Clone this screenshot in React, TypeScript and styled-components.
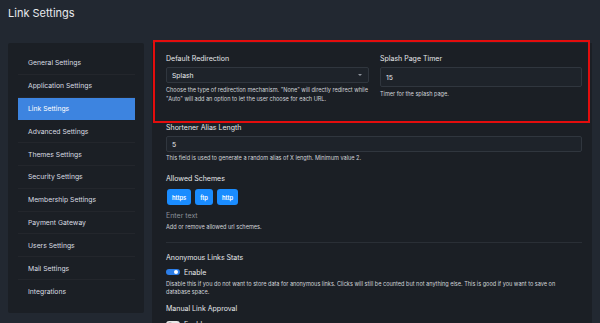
import React from "react";
import styled, { createGlobalStyle } from "styled-components";

const Global = createGlobalStyle`
  html, body { margin: 0; padding: 0; background: #222831; }
  body { font-family: Inter, "Noto Sans", sans-serif; color: #e4e6ea; overflow: hidden; }
  #root { height: 323px; }
`;

const Page = styled.div`
  height: 323px;
  padding: 6px 8px 0 8px;
  box-sizing: border-box;
  overflow: hidden;
`;

const Title = styled.h1`
  margin: 0 0 23px 0;
  font-size: 11px;
  line-height: 14px;
  font-weight: 400;
  color: #e8eaed;
`;

const Layout = styled.div`
  display: flex;
  gap: 8px;
  align-items: flex-start;
`;

const Sidebar = styled.nav`
  width: 136px;
  box-sizing: border-box;
  background: #1b1f25;
  border-radius: 2px;
  padding: 9px 9px 10px 10px;
  display: flex;
  flex-direction: column;
`;

const NavItem = styled.div<{ $active?: boolean }>`
  height: 22.8px;
  box-sizing: border-box;
  padding-left: 10px;
  display: flex;
  align-items: center;
  font-size: 6.8px;
  color: ${(p) => (p.$active ? "#ffffff" : "#d9dce1")};
  background: ${(p) => (p.$active ? "#3d84e0" : "transparent")};
  border-bottom: 1px solid ${(p) => (p.$active ? "#3d84e0" : "rgba(255,255,255,0.035)")};
  &:last-child { border-bottom: none; }
`;

const Main = styled.section`
  width: 440px;
  height: 290px;
  box-sizing: border-box;
  background: #1b1f25;
  padding: 0 10px 0 14px;
  display: flex;
  flex-direction: column;
`;

const Highlight = styled.div`
  margin: -3px -8px 0 -13px;
  border: 2px solid #e30d0d;
  padding: 12px 6px 18px 11px;
  display: grid;
  grid-template-columns: 203px 1fr;
  column-gap: 11px;
`;

const Field = styled.div`
  display: flex;
  flex-direction: column;
`;

const Label = styled.div<{ $mt?: number }>`
  font-size: 7px;
  line-height: 9px;
  color: #e6e8eb;
  margin-top: ${(p) => p.$mt ?? 0}px;
`;

const Help = styled.div<{ $mt?: number; $maxw?: number }>`
  font-size: 5.55px;
  line-height: 8.5px;
  color: #d2d5da;
  margin-top: ${(p) => p.$mt ?? 0}px;
  max-width: ${(p) => (p.$maxw ? `${p.$maxw}px` : "none")};
`;

const Box = styled.div<{ $h: number; $mt?: number }>`
  height: ${(p) => p.$h}px;
  box-sizing: border-box;
  margin-top: ${(p) => p.$mt ?? 4}px;
  background: #1e232a;
  border: 1px solid #30363e;
  border-radius: 2px;
  padding: 0 5px;
  display: flex;
  align-items: center;
  justify-content: space-between;
  font-size: 6.8px;
  color: #e8eaed;
`;

const Caret = styled.span`
  width: 0;
  height: 0;
  border-left: 2px solid transparent;
  border-right: 2px solid transparent;
  border-top: 2px solid #8d939b;
  margin-right: 1px;
`;

const Chips = styled.div`
  display: flex;
  gap: 4px;
  margin-top: 6.5px;
  padding-left: 1px;
`;

const Chip = styled.span`
  height: 16px;
  box-sizing: border-box;
  padding: 0 5px;
  display: flex;
  align-items: center;
  background: #1a8cff;
  border-radius: 3px;
  font-size: 5.8px;
  font-weight: 600;
  color: #ffffff;
`;

const Placeholder = styled.div`
  font-size: 7px;
  line-height: 9px;
  color: #8a9098;
  margin-top: 5.5px;
`;

const Divider = styled.div`
  height: 1px;
  background: #2a2f36;
  margin-top: 11px;
`;

const ToggleRow = styled.div<{ $mt?: number }>`
  display: flex;
  align-items: center;
  gap: 4px;
  height: 9px;
  margin-top: ${(p) => p.$mt ?? 6}px;
  font-size: 7px;
  color: #e6e8eb;
`;

const Switch = styled.span<{ $on?: boolean }>`
  position: relative;
  width: 14px;
  height: 6px;
  border-radius: 3px;
  background: ${(p) => (p.$on ? "#2c7ee8" : "#e8e8e8")};
  &::after {
    content: "";
    position: absolute;
    top: 1px;
    ${(p) => (p.$on ? "right: 2px;" : "left: 2px;")}
    width: 4px;
    height: 4px;
    border-radius: 50%;
    background: ${(p) => (p.$on ? "#ffffff" : "#b8b8b8")};
  }
`;

const navItems = [
  "General Settings",
  "Application Settings",
  "Link Settings",
  "Advanced Settings",
  "Themes Settings",
  "Security Settings",
  "Membership Settings",
  "Payment Gateway",
  "Users Settings",
  "Mail Settings",
  "Integrations",
];

export default function App() {
  return (
    <Page>
      <Global />
      <Title>Link Settings</Title>
      <Layout>
        <Sidebar>
          {navItems.map((n) => (
            <NavItem key={n} $active={n === "Link Settings"}>
              {n}
            </NavItem>
          ))}
        </Sidebar>
        <Main>
          <Highlight>
            <Field>
              <Label>Default Redirection</Label>
              <Box $h={16}>
                <span>Splash</span>
                <Caret />
              </Box>
              <Help $mt={3}>
                Choose the type of redirection mechanism. "None" will directly redirect while
                "Auto" will add an option to let the user choose for each URL.
              </Help>
            </Field>
            <Field>
              <Label>Splash Page Timer</Label>
              <Box $h={20}>
                <span>15</span>
              </Box>
              <Help $mt={3}>Timer for the splash page.</Help>
            </Field>
          </Highlight>
          <Label $mt={0}>Shortener Alias Length</Label>
          <Box $h={16}>
            <span>5</span>
          </Box>
          <Help $mt={2}>This field is used to generate a random alias of X length. Minimum value 2.</Help>
          <Label $mt={11}>Allowed Schemes</Label>
          <Chips>
            <Chip>https</Chip>
            <Chip>ftp</Chip>
            <Chip>http</Chip>
          </Chips>
          <Placeholder>Enter text</Placeholder>
          <Help $mt={3}>Add or remove allowed url schemes.</Help>
          <Divider />
          <Label $mt={9.5}>Anonymous Links Stats</Label>
          <ToggleRow>
            <Switch $on />
            <span>Enable</span>
          </ToggleRow>
          <Help $mt={3} $maxw={400}>
            Disable this if you do not want to store data for anonymous links. Clicks will still be counted but not anything else. This is good if you want to save on
            database space.
          </Help>
          <Label $mt={7}>Manual Link Approval</Label>
          <ToggleRow $mt={7}>
            <Switch />
            <span>Enable</span>
          </ToggleRow>
        </Main>
      </Layout>
    </Page>
  );
}
